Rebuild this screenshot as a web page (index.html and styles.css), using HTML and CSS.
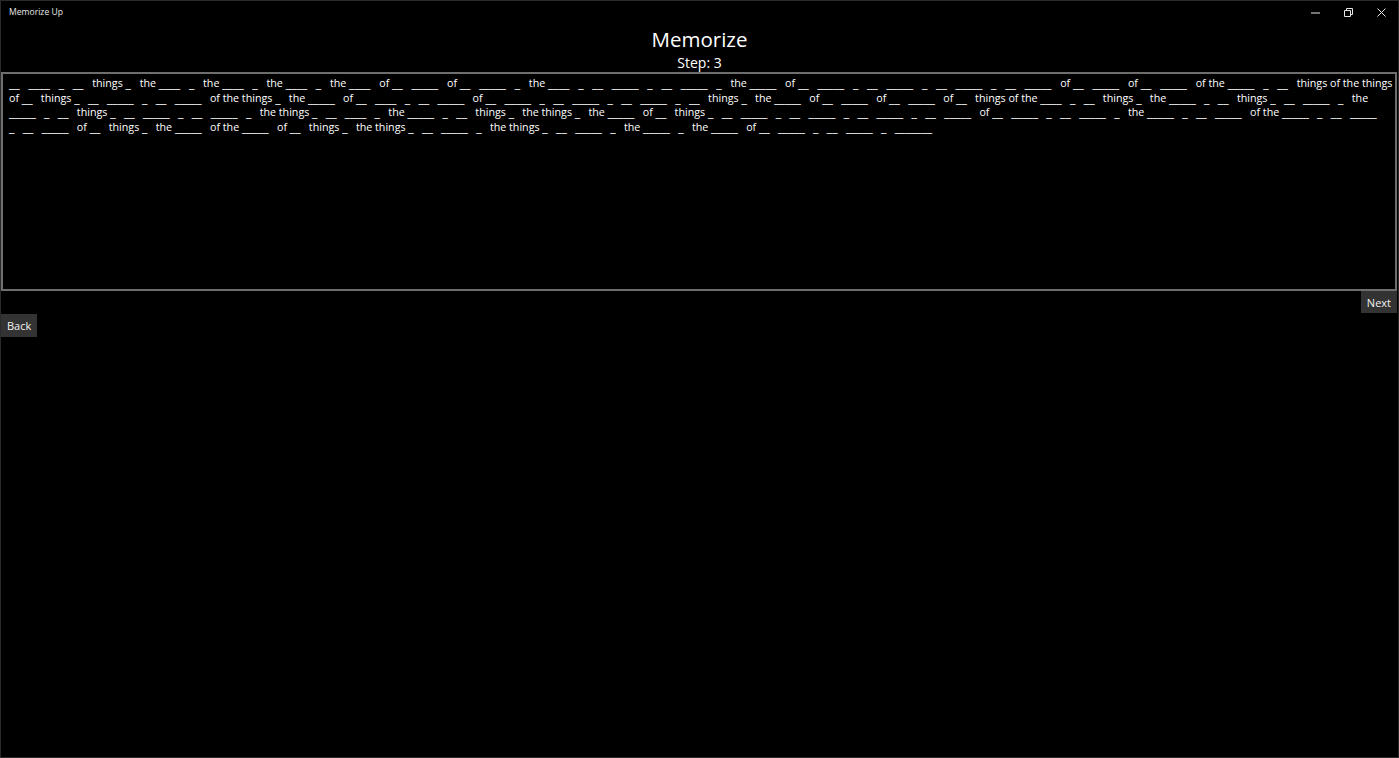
FILE: index.html
```html
<!DOCTYPE html>
<html lang="en">
<head>
<meta charset="utf-8">
<title>Memorize Up</title>
<link rel="stylesheet" href="styles.css">
</head>
<body>
<div class="window">
  <header class="titlebar">
    <span class="app-name">Memorize Up</span>
    <div class="controls">
      <span class="ctl"><svg width="9" height="9" viewBox="0 0 9 9"><path d="M0 5H9" stroke="#e6e6e6" stroke-width="1"/></svg></span>
      <span class="ctl"><svg width="9" height="9" viewBox="0 0 9 9"><path d="M0.5 2.5H6.5V8.5H0.5Z M2.5 2.5V0.5H8.5V6.5H6.5" fill="none" stroke="#e6e6e6" stroke-width="1"/></svg></span>
      <span class="ctl"><svg width="9" height="9" viewBox="0 0 9 9"><path d="M0.5 0.5L8.5 8.5M8.5 0.5L0.5 8.5" stroke="#e6e6e6" stroke-width="1"/></svg></span>
    </div>
  </header>
  <main class="content">
    <h1 class="title">Memorize</h1>
    <div class="step">Step: 3</div>
    <div class="textbox">
      <div class="line line-wide"><span class="u">__</span> <span class="u">____</span> <span class="u">_</span> <span class="u">__</span> things <span class="u">_</span> the <span class="u">____</span> <span class="u">_</span> the <span class="u">____</span> <span class="u">_</span> the <span class="u">____</span> <span class="u">_</span> the <span class="u">____</span> of <span class="u">__</span> <span class="u">_____</span> of <span class="u">__</span> <span class="u">_____</span> <span class="u">_</span> the <span class="u">____</span> <span class="u">_</span> <span class="u">__</span> <span class="u">_____</span> <span class="u">_</span> <span class="u">__</span> <span class="u">_____</span> <span class="u">_</span> the <span class="u">_____</span> of <span class="u">__</span> <span class="u">_____</span> <span class="u">_</span> <span class="u">__</span> <span class="u">_____</span> <span class="u">_</span> <span class="u">__</span> <span class="u">_____</span> <span class="u">_</span> <span class="u">__</span> <span class="u">_____</span> of <span class="u">__</span> <span class="u">_____</span> of <span class="u">__</span> <span class="u">_____</span> of the <span class="u">_____</span> <span class="u">_</span> <span class="u">__</span> things of the things</div>
      <div class="line">of <span class="u">__</span> things <span class="u">_</span> <span class="u">__</span> <span class="u">_____</span> <span class="u">_</span> <span class="u">__</span> <span class="u">_____</span> of the things <span class="u">_</span> the <span class="u">_____</span> of <span class="u">__</span> <span class="u">____</span> <span class="u">_</span> <span class="u">__</span> <span class="u">_____</span> of <span class="u">__</span> <span class="u">_____</span> <span class="u">_</span> <span class="u">__</span> <span class="u">_____</span> <span class="u">_</span> <span class="u">__</span> <span class="u">_____</span> <span class="u">_</span> <span class="u">__</span> things <span class="u">_</span> the <span class="u">_____</span> of <span class="u">__</span> <span class="u">_____</span> of <span class="u">__</span> <span class="u">_____</span> of <span class="u">__</span> things of the <span class="u">____</span> <span class="u">_</span> <span class="u">__</span> things <span class="u">_</span> the <span class="u">_____</span> <span class="u">_</span> <span class="u">__</span> things <span class="u">_</span> <span class="u">__</span> <span class="u">_____</span> <span class="u">_</span> the</div>
      <div class="line"><span class="u">_____</span> <span class="u">_</span> <span class="u">__</span> things <span class="u">_</span> <span class="u">__</span> <span class="u">_____</span> <span class="u">_</span> <span class="u">__</span> <span class="u">_____</span> <span class="u">_</span> the things <span class="u">_</span> <span class="u">__</span> <span class="u">____</span> <span class="u">_</span> the <span class="u">_____</span> <span class="u">_</span> <span class="u">__</span> things <span class="u">_</span> the things <span class="u">_</span> the <span class="u">_____</span> of <span class="u">__</span> things <span class="u">_</span> <span class="u">__</span> <span class="u">_____</span> <span class="u">_</span> <span class="u">__</span> <span class="u">_____</span> <span class="u">_</span> <span class="u">__</span> <span class="u">_____</span> <span class="u">_</span> <span class="u">__</span> <span class="u">_____</span> of <span class="u">__</span> <span class="u">_____</span> <span class="u">_</span> <span class="u">__</span> <span class="u">_____</span> <span class="u">_</span> the <span class="u">_____</span> <span class="u">_</span> <span class="u">__</span> <span class="u">_____</span> of the <span class="u">_____</span> <span class="u">_</span> <span class="u">__</span> <span class="u">_____</span></div>
      <div class="line"><span class="u">_</span> <span class="u">__</span> <span class="u">_____</span> of <span class="u">__</span> things <span class="u">_</span> the <span class="u">_____</span> of the <span class="u">_____</span> of <span class="u">__</span> things <span class="u">_</span> the things <span class="u">_</span> <span class="u">__</span> <span class="u">_____</span> <span class="u">_</span> the things <span class="u">_</span> <span class="u">__</span> <span class="u">_____</span> <span class="u">_</span> the <span class="u">_____</span> <span class="u">_</span> the <span class="u">_____</span> of <span class="u">__</span> <span class="u">_____</span> <span class="u">_</span> <span class="u">__</span> <span class="u">_____</span> <span class="u">_</span> <span class="u">_______</span></div>
    </div>
    <div class="nav nav-next"><button class="btn">Next</button></div>
    <div class="nav nav-back"><button class="btn">Back</button></div>
  </main>
</div>
</body>
</html>
```

FILE: styles.css
```css
html, body {
  margin: 0;
  padding: 0;
  background: #000;
  height: 100%;
}

body {
  font-family: "Open Sans", "Noto Sans", sans-serif;
  color: #fff;
}

.window {
  box-sizing: border-box;
  height: 758px;
  width: 1399px;
  border: 1px solid #2a2a2a;
  background: #000;
  display: flex;
  flex-direction: column;
}

.titlebar {
  height: 24px;
  display: flex;
  align-items: center;
  justify-content: space-between;
  flex: none;
}

.app-name {
  font-size: 8.6px;
  color: #e8e8e8;
  padding-left: 8px;
  margin-top: -2px;
}

.controls {
  display: flex;
  height: 100%;
  align-items: center;
}

.ctl {
  width: 33px;
  height: 100%;
  display: flex;
  align-items: center;
  justify-content: center;
}

.ctl svg {
  display: block;
  margin-top: -1px;
}

.content {
  flex: 1;
  display: flex;
  flex-direction: column;
}

.title {
  margin: 0;
  font-weight: 400;
  font-size: 20.5px;
  line-height: 28px;
  text-align: center;
}

.step {
  font-size: 14px;
  line-height: 19px;
  text-align: center;
}

.textbox {
  box-sizing: border-box;
  height: 219px;
  margin: 0 1px 0 0;
  border: 2px solid #6e6e6e;
  padding: 2px 6px 0 6px;
  font-size: 10.7px;
  line-height: 14.6px;
  overflow: hidden;
}

.line {
  white-space: nowrap;
  height: 14.6px;
}

.u {
  font-family: "DejaVu Sans", sans-serif;
  margin-right: 5.6px;
  line-height: 1;
}

.line-wide .u {
  margin-right: 6px;
}

.nav {
  display: flex;
}

.nav-next {
  justify-content: flex-end;
  padding-right: 1px;
}

.nav-back {
  justify-content: flex-start;
}

.btn {
  font-family: "Open Sans", "Noto Sans", sans-serif;
  font-size: 11px;
  color: #f2f2f2;
  background: #333333;
  border: none;
  height: 23px;
  padding: 0 6px;
  margin: 0;
  cursor: pointer;
}

.nav-next .btn {
  height: 22px;
  margin-bottom: 1px;
}
```
